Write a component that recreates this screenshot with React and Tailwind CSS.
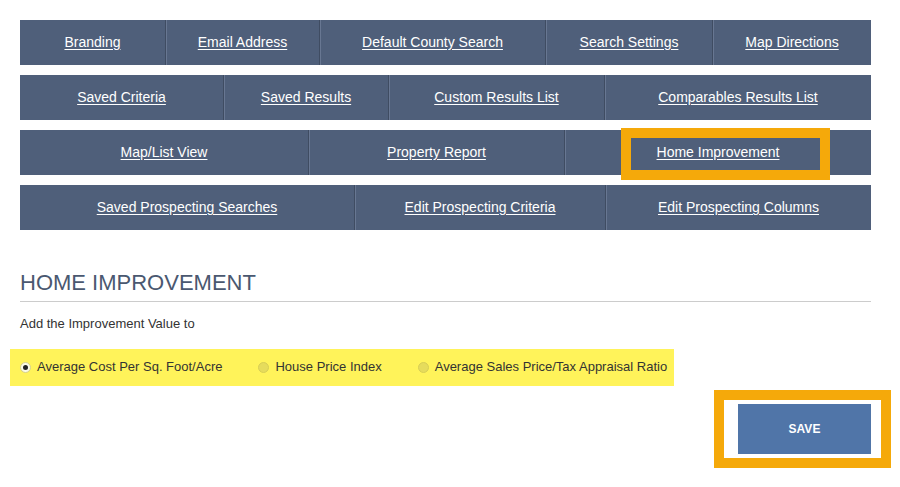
/**
 * Home Improvement settings page
 */

const rows = [
  {
    cols: 'grid-cols-[145px_154px_226px_167px_1fr]',
    items: ['Branding', 'Email Address', 'Default County Search', 'Search Settings', 'Map Directions']
  },
  {
    cols: 'grid-cols-[203px_165px_216px_1fr]',
    items: ['Saved Criteria', 'Saved Results', 'Custom Results List', 'Comparables Results List']
  },
  {
    cols: 'grid-cols-[288px_256px_1fr]',
    items: ['Map/List View', 'Property Report', 'Home Improvement']
  },
  {
    cols: 'grid-cols-[334px_251px_1fr]',
    items: ['Saved Prospecting Searches', 'Edit Prospecting Criteria', 'Edit Prospecting Columns']
  }
];

const options = [
  { label: 'Average Cost Per Sq. Foot/Acre', checked: true },
  { label: 'House Price Index', checked: false },
  { label: 'Average Sales Price/Tax Appraisal Ratio', checked: false }
];

const Radio = ({ checked }) =>
  checked ? (
    <span className="w-[11px] h-[11px] rounded-full bg-[#fbfbe8] border border-[#d6d08a] flex items-center justify-center">
      <span className="w-[5px] h-[5px] rounded-full bg-[#222]" />
    </span>
  ) : (
    <span className="w-[11px] h-[11px] rounded-full bg-[#e6dc5c] border border-[#d8ce55]" />
  );

const App = () => {
  return (
    <div className="w-[900px] h-[487px] bg-white pl-5 pt-5 font-['Liberation_Sans',Arial,sans-serif] overflow-hidden">
      <div className="w-[851px]">
        <div className="flex flex-col gap-[10px]">
          {rows.map((row) => (
            <div key={row.items[0]} className={`grid ${row.cols} h-[45px] bg-[#4f5f7a]`}>
              {row.items.map((item, i) => (
                <div
                  key={item}
                  className={`relative flex items-center justify-center ${
                    i > 0 ? 'border-l border-[#3f4c62] shadow-[inset_1px_0_0_#687792]' : ''
                  }`}
                >
                  <a href="#" className="text-white text-[14px] underline underline-offset-[2px]">
                    {item}
                  </a>
                  {item === 'Home Improvement' && (
                    <div className="absolute left-[56px] top-[-2px] w-[209px] h-[52px] border-[10px] border-[#f5a90a]" />
                  )}
                </div>
              ))}
            </div>
          ))}
        </div>

        <h2 className="mt-[40px] text-[22px] leading-[26px] text-[#4a5870] pb-[5px] border-b border-[#cccccc]">
          HOME IMPROVEMENT
        </h2>

        <p className="mt-[12px] text-[13px] text-[#333]">Add the Improvement Value to</p>

        <div className="mt-[15px] ml-[-10px] w-[664px] h-[37px] bg-[#fff35a] pl-[10px] flex items-center text-[13px] text-[#333]">
          {options.map((opt, i) => (
            <label
              key={opt.label}
              className={`flex items-center gap-[6px] ${i > 0 ? 'ml-[36px]' : ''}`}
            >
              <Radio checked={opt.checked} />
              <span>{opt.label}</span>
            </label>
          ))}
        </div>

        <div className="mt-[4px] flex justify-end mr-[-20px]">
          <div className="border-[10px] border-[#f5a90a] bg-white pl-[14px] pr-[10px] py-[4px]">
            <button className="w-[133px] h-[50px] bg-[#5075a8] text-white text-[12px] font-bold">
              SAVE
            </button>
          </div>
        </div>
      </div>
    </div>
  );
};

export default App;
